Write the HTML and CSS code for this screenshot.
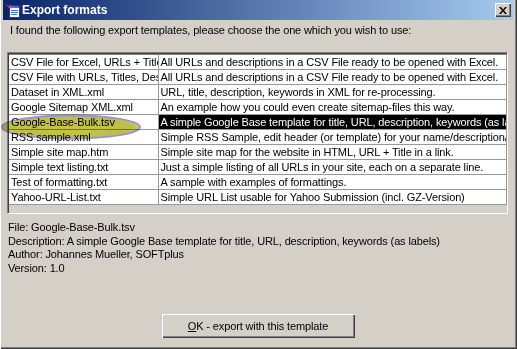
FILE: index.html
```html
<!DOCTYPE html>
<html lang="en">
<head>
    <meta charset="UTF-8">
    <title>Export formats</title>
    <link rel="stylesheet" href="styles.css">
</head>
<body>
    <div class="window">
        <div class="titlebar">
            <svg class="app-icon" width="16" height="16" viewBox="0 0 16 16">
                <rect x="5.5" y="3.5" width="10" height="12" fill="#fff" stroke="#1c3c9c"/>
                <rect x="6" y="4" width="9" height="2" fill="#3d6fd8"/>
                <line x1="7" y1="8.5" x2="14" y2="8.5" stroke="#3d6fd8"/>
                <line x1="7" y1="10.5" x2="14" y2="10.5" stroke="#3d6fd8"/>
                <line x1="7" y1="12.5" x2="13" y2="12.5" stroke="#3d6fd8"/>
                <path d="M0 1 L6 5 L5 2.5 L10 6 L6 6 L7 7.5 Z" fill="#e040a0"/>
            </svg>
            <span class="title">Export formats</span>
            <button class="close-btn">
                <svg width="8" height="7" viewBox="0 0 8 7">
                    <path d="M0 0 L2 0 L4 2.5 L6 0 L8 0 L5 3.5 L8 7 L6 7 L4 4.5 L2 7 L0 7 L3 3.5 Z" fill="#000"/>
                </svg>
            </button>
        </div>
        <div class="content">
            <p class="intro">I found the following export templates, please choose the one which you wish to use:</p>
            <div class="list">
                <table class="grid">
                    <colgroup><col class="col-name"><col class="col-desc"></colgroup>
                    <tr><td>CSV File for Excel, URLs + Titles</td><td>All URLs and descriptions in a CSV File ready to be opened with Excel.</td></tr>
                    <tr><td>CSV File with URLs, Titles, Descriptions</td><td>All URLs and descriptions in a CSV File ready to be opened with Excel.</td></tr>
                    <tr><td>Dataset in XML.xml</td><td>URL, title, description, keywords in XML for re-processing.</td></tr>
                    <tr><td>Google Sitemap XML.xml</td><td>An example how you could even create sitemap-files this way.</td></tr>
                    <tr class="selected"><td>Google-Base-Bulk.tsv</td><td>A simple Google Base template for title, URL, description, keywords (as labels)</td></tr>
                    <tr><td>RSS sample.xml</td><td>Simple RSS Sample, edit header (or template) for your name/description/</td></tr>
                    <tr><td>Simple site map.htm</td><td>Simple site map for the website in HTML, URL + Title in a link.</td></tr>
                    <tr><td>Simple text listing.txt</td><td>Just a simple listing of all URLs in your site, each on a separate line.</td></tr>
                    <tr><td>Test of formatting.txt</td><td>A sample with examples of formattings.</td></tr>
                    <tr><td>Yahoo-URL-List.txt</td><td>Simple URL List usable for Yahoo Submission (incl. GZ-Version)</td></tr>
                </table>
                <svg class="marker" width="146" height="28" viewBox="0 0 146 28">
                    <defs>
                        <radialGradient id="glow" cx="50%" cy="50%" r="55%">
                            <stop offset="0" stop-color="#c6c44c"/>
                            <stop offset="0.8" stop-color="#bebe48"/>
                            <stop offset="1" stop-color="#d0d090"/>
                        </radialGradient>
                    </defs>
                    <ellipse cx="71" cy="14" rx="69" ry="11.5" fill="url(#glow)" stroke="#9494d4" stroke-width="2"/>
                </svg>
            </div>
            <div class="info">
                <div>File: Google-Base-Bulk.tsv</div>
                <div>Description: A simple Google Base template for title, URL, description, keywords (as labels)</div>
                <div>Author: Johannes Mueller, SOFTplus</div>
                <div>Version: 1.0</div>
            </div>
            <div class="actions">
                <button class="ok-btn"><u>O</u>K - export with this template</button>
            </div>
        </div>
    </div>
</body>
</html>
```

FILE: styles.css
```css
body {
    margin: 0;
    font-family: "Liberation Sans", Arial, sans-serif;
    font-size: 11px;
    letter-spacing: -0.13px;
    background: #d4d0c8;
}
.window {
    width: 517px;
    height: 349px;
    box-sizing: border-box;
    display: flex;
    flex-direction: column;
    background: #d4d0c8;
    padding: 0 4px 3px 3px;
    box-shadow: inset 1px 0 0 #fff, inset -1px -1px 0 #404040, inset -2px -2px 0 #808080;
}
.titlebar {
    height: 20px;
    display: flex;
    align-items: center;
    background: linear-gradient(to right, #0a246a, #a6caf0);
    color: white;
    padding: 0 2px 0 1px;
}
.app-icon {
    margin-right: 2px;
}
.title {
    font-weight: bold;
    font-size: 12px;
    letter-spacing: 0;
    flex: 1;
}
.close-btn {
    width: 16px;
    height: 14px;
    padding: 0;
    display: flex;
    align-items: center;
    justify-content: center;
    background: #d4d0c8;
    border: none;
    box-shadow: inset 1px 1px 0 #fff, inset -1px -1px 0 #404040, inset -2px -2px 0 #808080;
}
.content {
    flex: 1;
    display: flex;
    flex-direction: column;
    padding: 0 0 0 4px;
}
.intro {
    margin: 4px 0 0 3px;
    line-height: 13px;
}
.list {
    position: relative;
    width: 501px;
    height: 162px;
    box-sizing: border-box;
    margin-top: 15px;
    border: 1px solid;
    border-color: #808080 #fff #fff #808080;
    box-shadow: inset 1px 1px 0 #404040, inset -1px -1px 0 #d4d0c8;
    padding: 1px 0 0 1px;
}
.grid {
    width: 498px;
    table-layout: fixed;
    border-collapse: collapse;
    background: white;
}
.col-name {
    width: 149px;
}
.grid td {
    height: 14px;
    padding: 0 0 0 2px;
    border: 1px solid #999;
    white-space: nowrap;
    overflow: hidden;
    line-height: 14px;
}
.grid tr:first-child td {
    border-top-color: #808080;
}
.grid td:first-child {
    border-left: none;
}
.selected td:last-child {
    background: black;
    color: white;
}
.marker {
    position: absolute;
    left: -8px;
    top: 60px;
    mix-blend-mode: multiply;
    pointer-events: none;
}
.info {
    margin: 7px 0 0 1px;
    line-height: 13.7px;
}
.actions {
    margin-top: auto;
    margin-bottom: 8px;
    display: flex;
    justify-content: center;
    padding-right: 4px;
}
.ok-btn {
    width: 193px;
    height: 24px;
    font-family: "Liberation Sans", Arial, sans-serif;
    font-size: 11px;
    letter-spacing: -0.13px;
    color: black;
    background: #d4d0c8;
    border: none;
    box-shadow: inset 1px 1px 0 #fff, inset -1px -1px 0 #404040, inset -2px -2px 0 #808080;
}
```
